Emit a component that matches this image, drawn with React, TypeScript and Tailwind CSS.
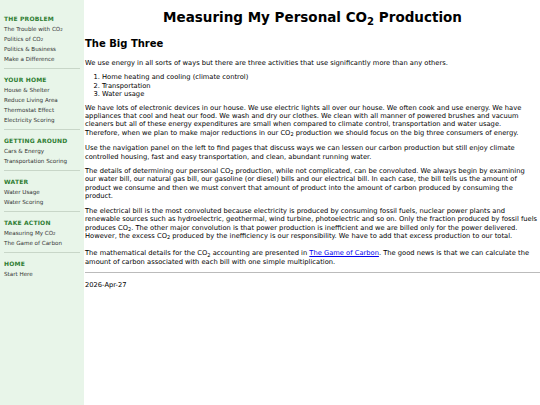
const sections = [
  {
    title: 'THE PROBLEM',
    items: [<>The Trouble with CO<sub>2</sub></>, <>Politics of CO<sub>2</sub></>, 'Politics & Business', 'Make a Difference'],
  },
  {
    title: 'YOUR HOME',
    items: ['House & Shelter', 'Reduce Living Area', 'Thermostat Effect', 'Electricity Scoring'],
  },
  { title: 'GETTING AROUND', items: ['Cars & Energy', 'Transportation Scoring'] },
  { title: 'WATER', items: ['Water Usage', 'Water Scoring'] },
  { title: 'TAKE ACTION', items: [<>Measuring My CO<sub>2</sub></>, 'The Game of Carbon'] },
  { title: 'HOME', items: ['Start Here'] },
];

function Sub() {
  return <sub className="text-[0.75em] leading-none align-baseline relative top-[0.25em]">2</sub>;
}

function Sidebar() {
  return (
    <nav className="w-[84px] shrink-0 bg-[#e8f5e9] pt-[13.5px] px-[4px] min-h-[405px]">
      {sections.map((s, i) => (
        <div key={s.title} className={i > 0 ? 'border-t border-[#c8d6c8] mt-[4px] pt-[6px]' : ''}>
          <div className="text-[6px] font-bold tracking-[0.03em] text-[#2e7d32] leading-[10px]">{s.title}</div>
          {s.items.map((it, j) => (
            <div
              key={j}
              className="text-[5.6px] text-[#333] leading-[10px] whitespace-nowrap [&_sub]:text-[0.7em] [&_sub]:leading-none"
            >
              {it}
            </div>
          ))}
        </div>
      ))}
    </nav>
  );
}

export default function App() {
  return (
    <div
      className="flex w-[540px] min-h-[405px] overflow-hidden bg-white text-black"
      style={{ fontFamily: '"DejaVu Sans", Verdana, sans-serif' }}
    >
      <Sidebar />
      <main className="flex-1 min-w-0 pl-[1px] text-[6.72px] leading-[8.4px] [&_p]:whitespace-nowrap">
        <h1 className="text-center text-[13.5px] font-bold leading-[18px] mt-[8px]">
          Measuring My Personal CO<Sub /> Production
        </h1>
        <h2 className="text-[10px] font-bold leading-[13px] mt-[11px]">The Big Three</h2>
        <p className="mt-[9px]">
          We use energy in all sorts of ways but there are three activities that use significantly more than any others.
        </p>
        <ol className="list-decimal pl-[17px] mt-[6px]">
          <li>Home heating and cooling (climate control)</li>
          <li>Transportation</li>
          <li>Water usage</li>
        </ol>
        <p className="mt-[5px]">
          We have lots of electronic devices in our house. We use electric lights all over our house. We often cook and use energy. We have
          <br />
          appliances that cool and heat our food. We wash and dry our clothes. We clean with all manner of powered brushes and vacuum
          <br />
          cleaners but all of these energy expenditures are small when compared to climate control, transportation and water usage.
          <br />
          Therefore, when we plan to make major reductions in our CO<Sub /> production we should focus on the big three consumers of energy.
        </p>
        <p className="mt-[7px]">
          Use the navigation panel on the left to find pages that discuss ways we can lessen our carbon production but still enjoy climate
          <br />
          controlled housing, fast and easy transportation, and clean, abundant running water.
        </p>
        <p className="mt-[6px]">
          The details of determining our personal CO<Sub /> production, while not complicated, can be convoluted. We always begin by examining
          <br />
          our water bill, our natural gas bill, our gasoline (or diesel) bills and our electrical bill. In each case, the bill tells us the amount of
          <br />
          product we consume and then we must convert that amount of product into the amount of carbon produced by consuming the
          <br />
          product.
        </p>
        <p className="mt-[6px]">
          The electrical bill is the most convoluted because electricity is produced by consuming fossil fuels, nuclear power plants and
          <br />
          renewable sources such as hydroelectric, geothermal, wind turbine, photoelectric and so on. Only the fraction produced by fossil fuels
          <br />
          produces CO<Sub />. The other major convolution is that power production is inefficient and we are billed only for the power delivered.
          <br />
          However, the excess CO<Sub /> produced by the inefficiency is our responsibility. We have to add that excess production to our total.
        </p>
        <p className="mt-[9px]">
          The mathematical details for the CO<Sub /> accounting are presented in{' '}
          <a href="#" className="text-[#0000ee] underline">
            The Game of Carbon
          </a>
          . The good news is that we can calculate the
          <br />
          amount of carbon associated with each bill with one simple multiplication.
        </p>
        <hr className="mt-[6px] border-t border-[#bbb]" />
        <p className="mt-[8px]">2026-Apr-27</p>
      </main>
    </div>
  );
}
